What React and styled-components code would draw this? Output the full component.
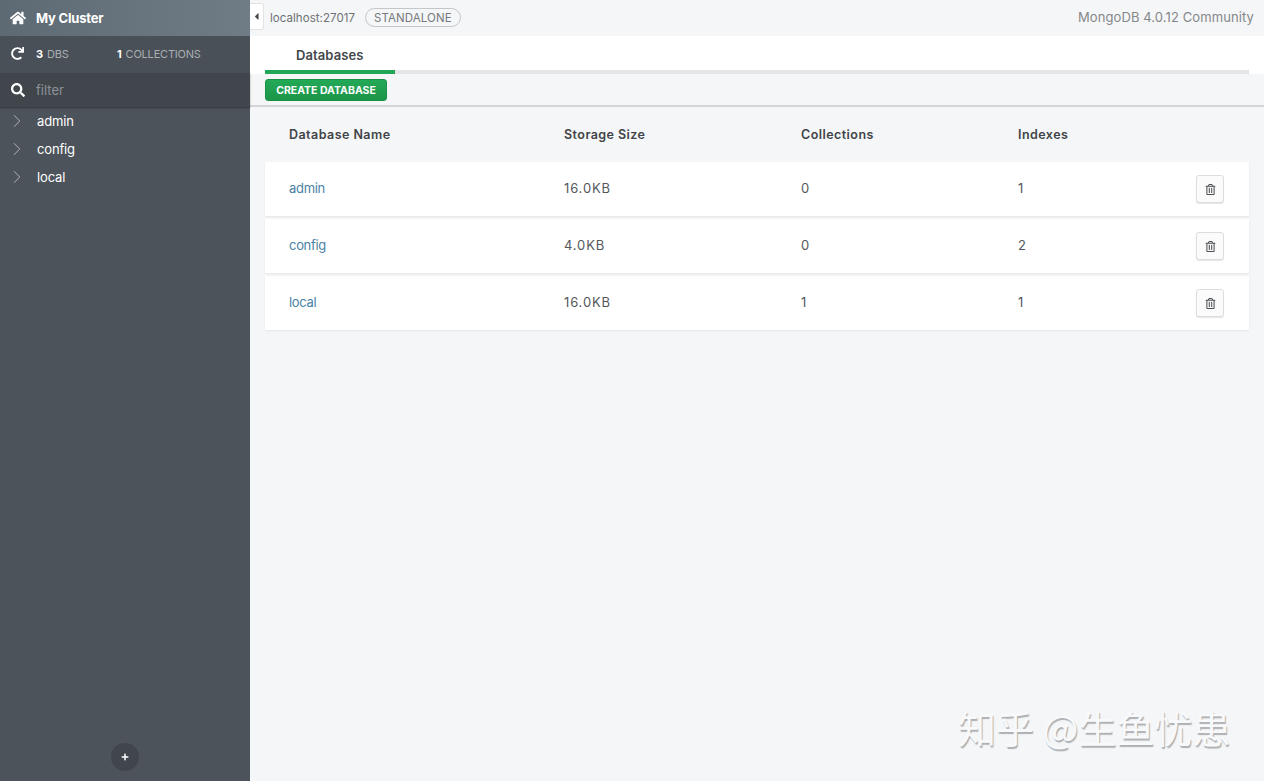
import React from "react";
import styled, { createGlobalStyle } from "styled-components";
import { FaHome, FaSearch, FaRegTrashAlt, FaCaretLeft, FaPlus, FaRedo } from "react-icons/fa";
import { ChevronRight } from "lucide-react";

const Global = createGlobalStyle`
  html, body { margin: 0; padding: 0; height: 100%; background: #f5f6f7; }
  #root { height: 100%; }
  * { box-sizing: border-box; }
`;
const Page = styled.div`
  display: flex; width: 1264px; height: 781px; overflow: hidden; position: relative;
  font-family: Inter, "Liberation Sans", sans-serif; background: #f5f6f7;
`;
const Sidebar = styled.aside`
  width: 250px; flex: none; display: flex; flex-direction: column; background: #4c535b; color: #fff;
`;
const ClusterBar = styled.div`
  height: 36px; display: flex; align-items: center; gap: 10px; padding-left: 10px;
  background: linear-gradient(90deg, #5e6a73, #6f7c86); font-size: 13px; font-weight: 700;
  letter-spacing: -0.2px;
`;
const StatsBar = styled.div`
  height: 37px; display: flex; align-items: center; padding: 0 0 2px 11px;
  background: #4a5058; font-size: 11px; color: #a9aeb3;
`;
const IconSlot = styled.span`
  width: 25px; flex: none; display: flex; align-items: center; color: #fff;
`;
const Stat = styled.span`
  width: ${p => p.$w}px; flex: none; letter-spacing: -0.2px;
  b { color: #fff; font-weight: 700; margin-right: 4px; }
`;
const FilterBar = styled.div`
  height: 34px; display: flex; align-items: center; padding-left: 11px; background: #40464c;
  box-shadow: 0 1px 2px rgba(0,0,0,.35); font-size: 13px; color: #8d9297; position: relative;
`;
const Tree = styled.div`
  flex: 1; display: flex; flex-direction: column;
`;
const TreeItem = styled.div`
  height: 28px; display: flex; align-items: center; padding-left: 6px; gap: 9px;
  font-size: 13px; color: #fff; letter-spacing: -0.15px;
  svg { color: #b9bdc1; margin-top: -1px; }
`;
const AddWrap = styled.div`
  height: 38px; display: flex; justify-content: center;
`;
const AddButton = styled.div`
  width: 28px; height: 28px; border-radius: 50%; background: #40464c; color: #fff;
  display: flex; align-items: center; justify-content: center;
`;
const Main = styled.main`
  flex: 1; min-width: 0; display: flex; flex-direction: column;
`;
const TopBar = styled.div`
  height: 36px; display: flex; align-items: center; padding-right: 10px; color: #7b7f83;
`;
const Collapse = styled.div`
  width: 14px; height: 27px; margin: -4px 6px 0 0; background: #fff; border: 1px solid #e2e3e4;
  border-left: none; border-radius: 0 3px 3px 0; display: flex; align-items: center; justify-content: center;
  color: #45494d;
`;
const Host = styled.span`
  font-size: 11.5px; color: #6d7175; letter-spacing: .05px; margin-right: 10px; margin-top: -1px;
`;
const Pill = styled.span`
  height: 19px; padding: 0 8px; border: 1px solid #c4c6c8; border-radius: 10px; font-size: 11.5px;
  color: #75797d; display: flex; align-items: center; margin-top: -1px; letter-spacing: .1px;
`;
const Version = styled.span`
  margin-left: auto; font-size: 13px; color: #85888b; margin-top: -2px; letter-spacing: .1px;
`;
const TabStrip = styled.div`
  height: 38px; background: #fff; padding-left: 15px; display: flex; flex-direction: column;
`;
const TabRow = styled.div`
  flex: 1; display: flex; align-items: center; padding: 4px 0 0 31px; font-size: 13px; font-weight: 600;
  color: #43474b; letter-spacing: .1px;
`;
const TabLine = styled.div`
  height: 4px; margin-right: 15px; background: #e4e5e6; display: flex;
`;
const ActiveTab = styled.div`
  width: 130px; background: #21a556;
`;
const Toolbar = styled.div`
  height: 33px; padding: 5px 15px 0; flex: none; border-bottom: 2px solid #d3d5d7;
`;
const CreateButton = styled.div`
  width: 122px; height: 22px; border-radius: 3px; background: linear-gradient(#18a54f, #119140);
  border: 1px solid #0f8a3d; display: flex; align-items: center; justify-content: center;
  color: #fff; opacity: .95; font-size: 10.5px; font-weight: 700; letter-spacing: 0;
`;
const Content = styled.div`
  padding: 0 15px;
`;
const columns = "275px 237px 217px 1fr 53px";
const HeadRow = styled.div`
  display: grid; grid-template-columns: ${columns}; height: 55px; padding: 0 0 1px 24px; align-items: center;
  font-size: 12.5px; font-weight: 600; color: #404448; letter-spacing: .45px;
`;
const Rows = styled.div`
  display: flex; flex-direction: column; gap: 3px;
`;
const Row = styled.div`
  display: grid; grid-template-columns: ${columns}; height: 54px; padding-left: 24px; align-items: center;
  background: #fff; font-size: 13px; color: #54585c; box-shadow: 0 1px 2px rgba(0,0,0,.07);
`;
const DbLink = styled.span`
  color: #4a82a5; letter-spacing: -0.3px; margin-top: -2px;
`;
const Value = styled.span`
  letter-spacing: .85px; margin-top: -2px;
`;
const TrashButton = styled.div`
  width: 28px; height: 28px; background: #fbfbfb; border: 1px solid #dcdddf; border-radius: 3px;
  box-shadow: 0 1px 1px rgba(0,0,0,.1); display: flex; align-items: center; justify-content: center;
  color: #4c5054;
`;
const Watermark = styled.div`
  position: absolute; left: 958px; top: 703px; font-family: "Noto Sans CJK SC", sans-serif;
  font-size: 38px; line-height: 48px; color: #f8f9fa; white-space: pre;
  text-shadow: 1px 2px 1px #adb0b3;
`;

const data = [
  ["admin", "16.0KB", "0", "1"],
  ["config", "4.0KB", "0", "2"],
  ["local", "16.0KB", "1", "1"],
];

export default function App() {
  return (
    <Page>
      <Global />
      <Sidebar>
        <ClusterBar><FaHome size={16} /><span>My Cluster</span></ClusterBar>
        <StatsBar>
          <IconSlot><FaRedo size={13} /></IconSlot>
          <Stat $w={81}><b>3</b>DBS</Stat>
          <Stat $w={110}><b>1</b>COLLECTIONS</Stat>
        </StatsBar>
        <FilterBar><IconSlot><FaSearch size={14} /></IconSlot>filter</FilterBar>
        <Tree>
          {data.map(d => (
            <TreeItem key={d[0]}><ChevronRight size={22} strokeWidth={1} />{d[0]}</TreeItem>
          ))}
        </Tree>
        <AddWrap><AddButton><FaPlus size={8} /></AddButton></AddWrap>
      </Sidebar>
      <Main>
        <TopBar>
          <Collapse><FaCaretLeft size={11} /></Collapse>
          <Host>localhost:27017</Host>
          <Pill>STANDALONE</Pill>
          <Version>MongoDB 4.0.12 Community</Version>
        </TopBar>
        <TabStrip>
          <TabRow>Databases</TabRow>
          <TabLine><ActiveTab /></TabLine>
        </TabStrip>
        <Toolbar><CreateButton>CREATE DATABASE</CreateButton></Toolbar>
        <Content>
          <HeadRow>
            <span>Database Name</span><span>Storage Size</span><span>Collections</span><span>Indexes</span><span />
          </HeadRow>
          <Rows>
            {data.map(d => (
              <Row key={d[0]}>
                <DbLink>{d[0]}</DbLink><Value>{d[1]}</Value><Value>{d[2]}</Value><Value>{d[3]}</Value>
                <TrashButton><FaRegTrashAlt size={11} /></TrashButton>
              </Row>
            ))}
          </Rows>
        </Content>
      </Main>
      <Watermark>知乎 @生鱼忧患</Watermark>
    </Page>
  );
}
